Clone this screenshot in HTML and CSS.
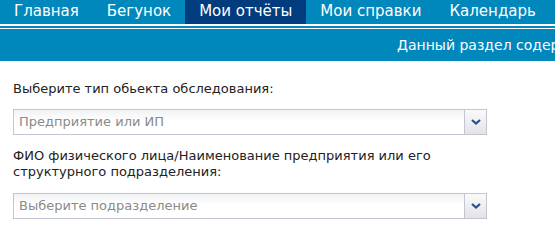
FILE: index.html
```html
<!DOCTYPE html>
<html lang="ru">
<head>
    <meta charset="UTF-8">
    <title>Мои отчёты</title>
    <link rel="stylesheet" href="styles.css">
</head>
<body>
    <ul class="menu">
        <li><a href="#">Главная</a></li>
        <li><a href="#">Бегунок</a></li>
        <li class="active"><a href="#">Мои отчёты</a></li>
        <li><a href="#">Мои справки</a></li>
        <li><a href="#">Календарь</a></li>
    </ul>
    <div class="rule"></div>
    <div class="notice">Данный раздел содержит информацию о ваших отчётах</div>

    <div class="form">
        <div class="field">
            <label class="field-label">Выберите тип обьекта обследования:</label>
            <div class="combo">
                <span class="combo-text">Предприятие или ИП</span>
                <span class="combo-btn">
                    <svg width="10" height="6" viewBox="0 0 10 6"><path d="M1 1 L5 4.5 L9 1" fill="none" stroke="#2b4f8e" stroke-width="2.2"/></svg>
                </span>
            </div>
        </div>

        <div class="field">
            <label class="field-label">ФИО физического лица/Наименование предприятия или его структурного подразделения:</label>
            <div class="combo">
                <span class="combo-text">Выберите подразделение</span>
                <span class="combo-btn">
                    <svg width="10" height="6" viewBox="0 0 10 6"><path d="M1 1 L5 4.5 L9 1" fill="none" stroke="#2b4f8e" stroke-width="2.2"/></svg>
                </span>
            </div>
        </div>
    </div>
</body>
</html>
```

FILE: styles.css
```css
body {
    margin: 0;
    font-family: Tahoma, "DejaVu Sans", sans-serif;
    background: #fff;
}

.menu {
    display: flex;
    margin: 0;
    padding: 0;
    list-style: none;
    height: 24px;
    background-color: #0087bc;
    overflow: hidden;
}

.menu li {
    flex-shrink: 0;
}

.menu li a {
    display: block;
    height: 24px;
    line-height: 23px;
    padding: 0 14px;
    font-size: 15px;
    color: #fff;
    text-decoration: none;
    white-space: nowrap;
}

.menu li.active a {
    background-color: #003c7e;
}

.rule {
    height: 2px;
    margin: 2px 0 1px;
    background-color: #0087bc;
}

.notice {
    height: 32px;
    line-height: 32px;
    padding-left: 397px;
    background-color: #0087bc;
    color: #fff;
    font-size: 14px;
    white-space: nowrap;
    overflow: hidden;
}

.form {
    display: flex;
    flex-direction: column;
    gap: 13px;
    padding: 20px 13px 0;
    width: 474px;
}

.field {
    display: flex;
    flex-direction: column;
    gap: 12px;
}

.field + .field {
    gap: 13px;
}

.field-label {
    font-size: 13px;
    line-height: 16px;
    color: #222;
}

.combo {
    display: flex;
    height: 24px;
    border: 1px solid #c3c6d2;
    background: linear-gradient(#f1f2f4, #fff 45%);
}

.combo-text {
    flex: 1;
    padding-left: 5px;
    line-height: 24px;
    font-size: 13px;
    color: #8a8a8a;
}

.combo-btn {
    width: 21px;
    display: flex;
    align-items: center;
    justify-content: center;
    border-left: 1px solid #c3c6d2;
    background: linear-gradient(#fafafa, #e3e3e6);
}
```
